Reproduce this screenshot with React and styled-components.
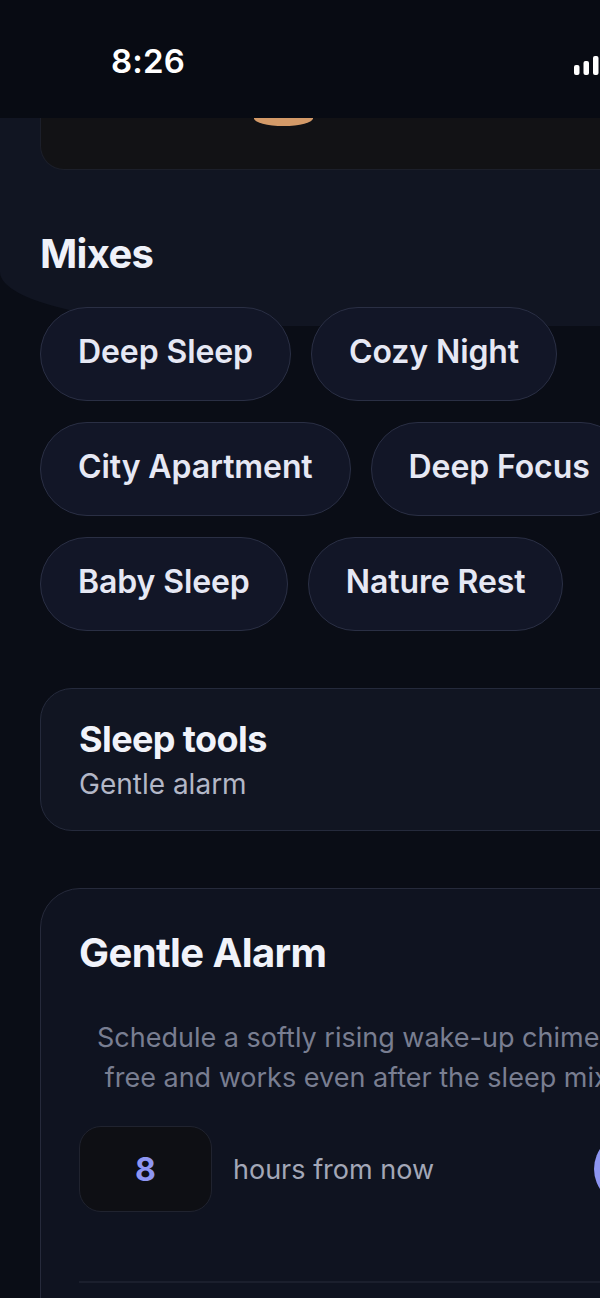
import React from "react";
import styled, { createGlobalStyle } from "styled-components";

const GlobalStyle = createGlobalStyle`
  html, body {
    margin: 0;
    padding: 0;
    background: #0a0d16;
    overflow-x: hidden;
  }
  * { box-sizing: border-box; }
`;

const Screen = styled.div`
  width: 828px;
  min-height: 1400px;
  background: #0a0d16;
  font-family: Inter, "Noto Sans", sans-serif;
  color: #f1f3fa;
  display: flex;
  flex-direction: column;
`;

const StatusBar = styled.div`
  height: 118px;
  background: #080b13;
  display: flex;
  align-items: center;
  padding-top: 4px;
  flex-shrink: 0;
`;

const Time = styled.div`
  width: 296px;
  text-align: center;
  font-size: 33px;
  font-weight: 600;
  color: #ffffff;
  letter-spacing: 0.2px;
`;

const StatusIcons = styled.div`
  margin-left: 278px;
  display: flex;
  align-items: flex-end;
  gap: 10px;
  padding-top: 4px;
`;

const Header = styled.div`
  background: #111522;
  border-bottom-left-radius: 240px 54px;
  padding: 0 0 48px 40px;
`;

const TopCard = styled.div`
  width: 748px;
  height: 52px;
  background: #121215;
  border: 1.5px solid #1c1f2a;
  border-top: none;
  border-radius: 0 0 24px 24px;
  padding-left: 213px;
`;

const PlayKnob = styled.div`
  width: 59px;
  height: 8px;
  background: #d49a68;
  border-radius: 0 0 30px 30px / 0 0 8px 8px;
`;

const SectionTitle = styled.h2`
  margin: 60px 0 0;
  font-size: 40px;
  line-height: 48px;
  font-weight: 700;
  letter-spacing: -0.7px;
  color: #eff1f9;
`;

const Body = styled.div`
  padding: 0 40px;
  display: flex;
  flex-direction: column;
`;

const ChipGrid = styled.div`
  margin-top: -19px;
  display: flex;
  flex-wrap: wrap;
  gap: 21px 20px;
`;

const Chip = styled.button`
  height: 94px;
  padding: 0 37px 6px;
  border-radius: 47px;
  background: #121627;
  border: 1.5px solid #2a2f44;
  color: #e6e8f4;
  font-family: Inter, "Noto Sans", sans-serif;
  font-size: 32px;
  font-weight: 600;
  letter-spacing: -0.1px;
  white-space: nowrap;
`;

const ToolsCard = styled.div`
  margin-top: 57px;
  background: #111522;
  border: 1.5px solid #252a3c;
  border-radius: 32px;
  padding: 28px 38px;
  display: flex;
  flex-direction: column;
  gap: 5px;
`;

const CardTitle = styled.div`
  font-size: ${(p) => p.$size || 36}px;
  line-height: ${(p) => p.$lh || 44}px;
  font-weight: 700;
  letter-spacing: -0.6px;
  color: #f1f3fa;
`;

const CardSub = styled.div`
  font-size: 28px;
  line-height: 36px;
  color: #b3b7c7;
`;

const AlarmCard = styled.div`
  margin-top: 57px;
  background: #0f1320;
  border: 1.5px solid #262a3b;
  border-radius: 40px;
  padding: 40px 38px 60px;
  display: flex;
  flex-direction: column;
`;

const Description = styled.p`
  margin: 41px 0 0;
  padding: 0 10px;
  font-size: 27px;
  line-height: 40px;
  color: #797e91;
  text-align: center;
`;

const HoursRow = styled.div`
  margin-top: 28px;
  display: flex;
  align-items: center;
`;

const HoursBox = styled.div`
  width: 133px;
  height: 86px;
  border-radius: 22px;
  background: #0e0f14;
  border: 1.5px solid #20232f;
  display: flex;
  align-items: center;
  justify-content: center;
  font-size: 32px;
  font-weight: 700;
  color: #8e96f2;
`;

const HoursLabel = styled.span`
  margin-left: 21px;
  font-size: 27px;
  color: #a3a7b7;
`;

const SetButton = styled.button`
  margin-left: auto;
  height: 72px;
  width: 155px;
  border: none;
  border-radius: 36px;
  background: #8d95f2;
  color: #0f1320;
  font-family: Inter, "Noto Sans", sans-serif;
  font-size: 26px;
  font-weight: 700;
`;

const Divider = styled.div`
  margin-top: 69px;
  height: 2px;
  background: #1b1f2d;
`;

const ExtraRow = styled.div`
  margin-top: 36px;
  font-size: 27px;
  color: #a3a7b7;
`;

const SignalIcon = () => (
  <svg width="34" height="20" viewBox="0 0 34 20">
    <rect x="0" y="10" width="5.5" height="10" rx="2" fill="#fff" />
    <rect x="9.5" y="6" width="5.5" height="14" rx="2" fill="#fff" />
    <rect x="19" y="1" width="5.5" height="19" rx="2" fill="#fff" />
    <rect x="28.5" y="0" width="5.5" height="20" rx="2" fill="#fff" />
  </svg>
);

const WifiIcon = () => (
  <svg width="30" height="22" viewBox="0 0 30 22" fill="none" stroke="#fff" strokeWidth="3" strokeLinecap="round">
    <path d="M3 8a17 17 0 0 1 24 0" />
    <path d="M8 13a10 10 0 0 1 14 0" />
    <circle cx="15" cy="18" r="2" fill="#fff" stroke="none" />
  </svg>
);

const BatteryIcon = () => (
  <svg width="50" height="24" viewBox="0 0 50 24">
    <rect x="1" y="1" width="42" height="22" rx="6" fill="none" stroke="#fff" strokeOpacity="0.5" strokeWidth="2" />
    <rect x="4" y="4" width="30" height="16" rx="3" fill="#fff" />
    <rect x="45" y="8" width="3" height="8" rx="1.5" fill="#fff" fillOpacity="0.5" />
  </svg>
);

const mixes = [
  "Deep Sleep",
  "Cozy Night",
  "City Apartment",
  "Deep Focus",
  "Baby Sleep",
  "Nature Rest",
];

export default function App() {
  return (
    <>
      <GlobalStyle />
      <Screen>
        <StatusBar>
          <Time>8:26</Time>
          <StatusIcons>
            <SignalIcon />
            <WifiIcon />
            <BatteryIcon />
          </StatusIcons>
        </StatusBar>
        <Header>
          <TopCard>
            <PlayKnob />
          </TopCard>
          <SectionTitle>Mixes</SectionTitle>
        </Header>
        <Body>
          <ChipGrid>
            {mixes.map((m) => (
              <Chip key={m}>{m}</Chip>
            ))}
          </ChipGrid>
          <ToolsCard>
            <CardTitle>Sleep tools</CardTitle>
            <CardSub>Gentle alarm</CardSub>
          </ToolsCard>
          <AlarmCard>
            <CardTitle $size={40} $lh={48}>Gentle Alarm</CardTitle>
            <Description>
              Schedule a softly rising wake-up chime — it's ad-free and works even
              after the sleep mix finishes.
            </Description>
            <HoursRow>
              <HoursBox>8</HoursBox>
              <HoursLabel>hours from now</HoursLabel>
              <SetButton>Set</SetButton>
            </HoursRow>
            <Divider />
            <ExtraRow>Alarm is off</ExtraRow>
          </AlarmCard>
        </Body>
      </Screen>
    </>
  );
}
